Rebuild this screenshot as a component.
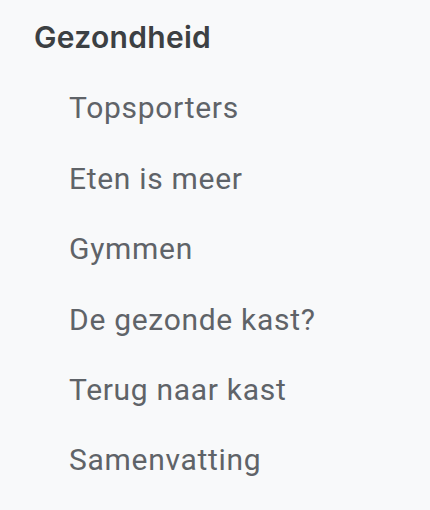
const items = [
  'Topsporters',
  'Eten is meer',
  'Gymmen',
  'De gezonde kast?',
  'Terug naar kast',
  'Samenvatting',
]

export default function App() {
  return (
    <nav className="min-h-[510px] w-[430px] bg-[#f8f9fa] pt-[2px] font-['Roboto',sans-serif]">
      <h2 className="pl-[34px] font-['Inter',sans-serif] text-[30px] leading-[70.4px] font-semibold tracking-[0.3px] text-[#3c4043]">
        Gezondheid
      </h2>
      <ul className="pt-px">
        {items.map((item) => (
          <li key={item} className="pl-[69px] text-[30px] leading-[70.4px] tracking-[0.7px] text-[#5f6368]">
            {item}
          </li>
        ))}
      </ul>
    </nav>
  )
}
